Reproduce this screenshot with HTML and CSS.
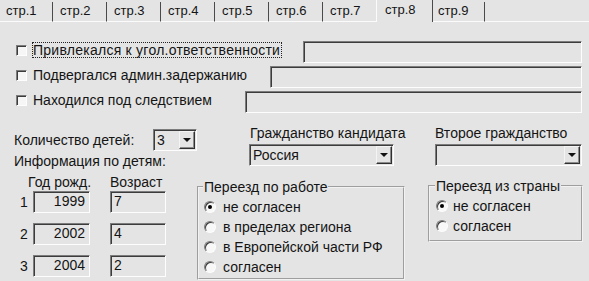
FILE: index.html
```html
<!DOCTYPE html>
<html lang="ru">
<head>
<meta charset="utf-8">
<title>стр.8</title>
<link rel="stylesheet" href="styles.css">
</head>
<body>
<div class="tabs">
  <div class="tab t-first">стр.1</div>
  <div class="tab">стр.2</div>
  <div class="tab">стр.3</div>
  <div class="tab">стр.4</div>
  <div class="tab">стр.5</div>
  <div class="tab">стр.6</div>
  <div class="tab t-seven">стр.7</div>
  <div class="tab t-active">стр.8</div>
  <div class="tab t-nine">стр.9</div>
  <div class="tab-rest"></div>
</div>

<div class="checks">
  <div class="crow">
    <span class="cbox"></span>
    <span class="clabel w1"><span class="focus">Привлекался к угол.ответственности</span></span>
    <span class="field grow"></span>
  </div>
  <div class="crow">
    <span class="cbox"></span>
    <span class="clabel w2"><span class="plain">Подвергался админ.задержанию</span></span>
    <span class="field grow"></span>
  </div>
  <div class="crow">
    <span class="cbox"></span>
    <span class="clabel w3"><span class="plain">Находился под следствием</span></span>
    <span class="field grow"></span>
  </div>
</div>

<div class="bottom">
  <div class="col-left">
    <div class="kids-row">
      <span>Количество детей:</span>
      <div class="combo small"><span class="ctext">3</span><span class="dbtn"><span class="tri"></span></span></div>
    </div>
    <div class="info">Информация по детям:</div>
    <div class="head-row">
      <span class="h-year">Год рожд.</span>
      <span class="h-age">Возраст</span>
    </div>
    <div class="child-row">
      <span class="num">1</span>
      <span class="field year">1999</span>
      <span class="field age">7</span>
    </div>
    <div class="child-row">
      <span class="num">2</span>
      <span class="field year">2002</span>
      <span class="field age">4</span>
    </div>
    <div class="child-row">
      <span class="num">3</span>
      <span class="field year">2004</span>
      <span class="field age">2</span>
    </div>
  </div>

  <div class="col-mid">
    <div class="cap mid-cap">Гражданство кандидата</div>
    <div class="combo mid-combo"><span class="ctext">Россия</span><span class="dbtn"><span class="tri"></span></span></div>
    <fieldset class="group g-work">
      <legend>Переезд по работе</legend>
      <div class="radio-row"><span class="radio on"></span><span>не согласен</span></div>
      <div class="radio-row"><span class="radio"></span><span>в пределах региона</span></div>
      <div class="radio-row"><span class="radio"></span><span>в Европейской части РФ</span></div>
      <div class="radio-row"><span class="radio"></span><span>согласен</span></div>
    </fieldset>
  </div>

  <div class="col-right">
    <div class="cap right-cap">Второе гражданство</div>
    <div class="combo right-combo"><span class="ctext"></span><span class="dbtn"><span class="tri"></span></span></div>
    <fieldset class="group g-country">
      <legend>Переезд из страны</legend>
      <div class="radio-row"><span class="radio on"></span><span>не согласен</span></div>
      <div class="radio-row"><span class="radio"></span><span>согласен</span></div>
    </fieldset>
  </div>
</div>
</body>
</html>
```

FILE: styles.css
```css
* { box-sizing: border-box; }

html, body {
  margin: 0;
  padding: 0;
  background: #e4e4e4;
  color: #141414;
  font-family: "Liberation Sans", Arial, sans-serif;
  font-size: 14px;
  width: 589px;
  height: 281px;
  overflow: hidden;
  white-space: nowrap;
}

/* ---------- tabs ---------- */
.tabs {
  display: flex;
  height: 22px;
}
.tab {
  margin-top: 2px;
  height: 20px;
  width: 54px;
  padding-left: 7px;
  font-size: 13px;
  line-height: 17px;
  border-right: 1px solid #4a4a4a;
  border-bottom: 1px solid #fbfbfb;
}
.t-first { width: 53px; padding-left: 6px; }
.t-seven { width: 53px; border-right: none; }
.t-active {
  margin-top: 0;
  height: 22px;
  width: 57px;
  padding-left: 8px;
  line-height: 20px;
  border-bottom: none;
  border-left: 1px solid #fbfbfb;
}
.t-nine { width: 52px; padding-left: 5px; }
.tab-rest {
  flex: 1;
  margin-top: 2px;
  height: 20px;
  border-bottom: 1px solid #fbfbfb;
}

/* ---------- sunken field ---------- */
.field {
  display: block;
  height: 22px;
  border: 1px solid;
  border-color: #7c7c7c #fdfdfd #fdfdfd #7c7c7c;
  box-shadow: inset 1px 1px 0 #3c3c3c;
  background: #e4e4e4;
  line-height: 19px;
  padding: 0 4px 0 3px;
}

/* ---------- check rows ---------- */
.checks {
  padding: 17px 7px 0 16px;
}
.crow {
  display: flex;
  align-items: center;
  height: 25px;
}
.cbox {
  width: 11px;
  height: 11px;
  margin-top: -3px;
  flex: none;
  background: #f6f6f6;
  border: 1px solid;
  border-color: #7c7c7c #fdfdfd #fdfdfd #7c7c7c;
  box-shadow: inset 1px 1px 0 #3c3c3c;
}
.clabel {
  flex: none;
  margin-left: 5px;
  margin-top: -3px;
  display: flex;
}
.w1 { width: 271px; }
.w2 { width: 238px; }
.w3 { width: 213px; }
.focus {
  border: 1px dotted #222;
  line-height: 14px;
  padding: 0 1px 0 0;
  letter-spacing: 0.25px;
}
.plain {
  border: 1px solid transparent;
  line-height: 14px;
}
.grow { flex: 1; }

/* ---------- bottom ---------- */
.bottom {
  display: flex;
  padding-left: 14px;
  margin-top: 11px;
}
.col-left { width: 183px; flex: none; }
.col-mid { width: 208px; flex: none; }
.col-right { width: 155px; flex: none; margin-left: 23px; }

.kids-row {
  display: flex;
  align-items: center;
  justify-content: space-between;
  margin-top: 4px;
  height: 21px;
}
.info {
  margin-top: 3px;
  line-height: 16px;
}
.head-row {
  display: flex;
  margin-top: 5px;
  line-height: 16px;
}
.h-year { margin-left: 14px; width: 82px; }
.child-row {
  display: flex;
  align-items: center;
  margin-top: 1px;
  margin-bottom: 10px;
}
.child-row + .child-row { margin-top: 0; }
.num { width: 19px; padding-left: 6px; }
.year { width: 57px; text-align: right; }
.age { width: 56px; margin-left: 20px; }

/* ---------- combos ---------- */
.combo {
  display: flex;
  align-items: center;
  height: 22px;
  border: 1px solid;
  border-color: #7c7c7c #fdfdfd #fdfdfd #7c7c7c;
  box-shadow: inset 1px 1px 0 #3c3c3c;
  padding: 1px 1px 1px 2px;
  background: #e4e4e4;
}
.ctext { flex: 1; line-height: 18px; padding-left: 1px; }
.dbtn {
  width: 16px;
  height: 18px;
  flex: none;
  display: flex;
  align-items: center;
  justify-content: center;
  border: 1px solid;
  border-color: #f4f4f4 #303030 #303030 #f4f4f4;
  box-shadow: inset -1px -1px 0 #8a8a8a;
  background: #e4e4e4;
}
.tri {
  width: 0;
  height: 0;
  border-left: 4px solid transparent;
  border-right: 4px solid transparent;
  border-top: 4px solid #111;
}
.small { width: 44px; }
.cap { line-height: 16px; }
.mid-cap { margin-left: 53px; }
.mid-combo { margin-left: 52px; margin-top: 3px; width: 145px; }
.right-cap { margin-left: 7px; }
.right-combo { margin-left: 7px; margin-top: 3px; width: 147px; }

/* ---------- groups ---------- */
.group {
  margin: 0;
  border: 2px groove #f2f2f2;
  padding: 0 4px 2px 4px;
  min-width: 0;
}
.group legend {
  padding: 0 1px;
  line-height: 16px;
}
.g-work { margin-top: 13px; width: 208px; height: 101px; padding-bottom: 0; }
.g-country { margin-top: 12px; width: 155px; height: 64px; padding-left: 5px; }
.radio-row {
  display: flex;
  align-items: center;
  height: 20px;
}
.radio-row:first-of-type { margin-top: 2px; }
.radio {
  width: 12px;
  height: 12px;
  flex: none;
  border-radius: 50%;
  background: #f8f8f8;
  border: 1px solid;
  border-color: #7c7c7c #fdfdfd #fdfdfd #7c7c7c;
  box-shadow: inset 1px 1px 0 #3c3c3c;
  margin-left: 1px;
  margin-right: 7px;
  display: flex;
  align-items: center;
  justify-content: center;
}
.radio.on::after {
  content: "";
  width: 4px;
  height: 4px;
  border-radius: 50%;
  background: #000;
}
.g-country .radio { margin-right: 5px; }
```
